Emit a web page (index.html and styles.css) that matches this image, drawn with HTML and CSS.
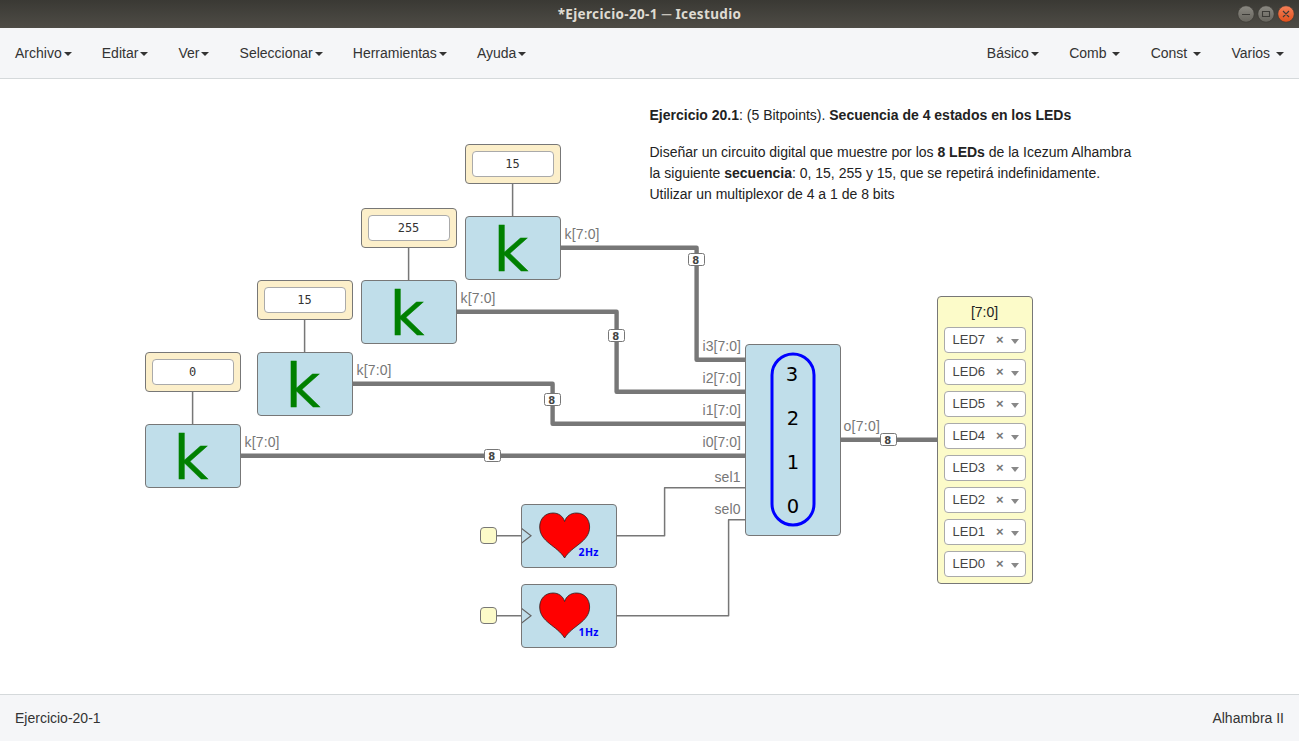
FILE: index.html
```html
<!DOCTYPE html>
<html lang="es">
<head>
<meta charset="utf-8">
<title>*Ejercicio-20-1 ─ Icestudio</title>
<link rel="stylesheet" href="styles.css">
</head>
<body>
<header class="titlebar">
  <span class="title">*Ejercicio-20-1 ─ Icestudio</span>
  <svg class="window-buttons" width="60" height="20" viewBox="0 0 60 20">
    <defs>
      <linearGradient id="gray" x1="0" y1="0" x2="0" y2="1"><stop offset="0" stop-color="#8b8982"/><stop offset="1" stop-color="#66645d"/></linearGradient>
      <linearGradient id="orange" x1="0" y1="0" x2="0" y2="1"><stop offset="0" stop-color="#f58058"/><stop offset="1" stop-color="#e0501c"/></linearGradient>
    </defs>
    <g stroke="#35342f" stroke-width=".6">
      <circle cx="10" cy="10" r="8.2" fill="url(#gray)"/>
      <circle cx="30" cy="10" r="8.2" fill="url(#gray)"/>
      <circle cx="50" cy="10" r="8.2" fill="url(#orange)"/>
    </g>
    <g stroke="#3c3b37" stroke-width="1.1" fill="none">
      <path d="M6 10.500h8M26.500 7.500h7v5h-7zM47 7l6 6M53 7l-6 6"/>
    </g>
  </svg>
</header>
<nav class="menubar">
  <ul class="menu">
    <li>Archivo<i class="caret"></i></li>
    <li>Editar<i class="caret"></i></li>
    <li>Ver<i class="caret"></i></li>
    <li>Seleccionar<i class="caret"></i></li>
    <li>Herramientas<i class="caret"></i></li>
    <li>Ayuda<i class="caret"></i></li>
  </ul>
  <ul class="menu blocks">
    <li>Básico<i class="caret"></i></li>
    <li>Comb <i class="caret"></i></li>
    <li>Const <i class="caret"></i></li>
    <li>Varios <i class="caret"></i></li>
  </ul>
</nav>
<main class="canvas">
  <svg class="wires" width="1299" height="615" viewBox="0 79 1299 615">
    <g class="bus">
      <path d="M561 247.800H696.600V359.800H745"/>
      <path d="M457 311.800H616.600V391.800H745"/>
      <path d="M353 383.800H552.600V423.800H745"/>
      <path d="M241 455.800H745"/>
      <path d="M841 439.800H937"/>
    </g>
    <g class="wire">
      <path d="M192.600 392V424M304.600 320V352M408.600 248V280M512.600 184V216"/>
      <path d="M497 535.700H521M617 535.700H664.600V487.700H745"/>
      <path d="M497 615.700H521M617 615.700H728.600V519.700H745"/>
    </g>
    <g class="port">
      <text x="564.5" y="239" textLength="35">k[7:0]</text>
      <text x="460.5" y="303" textLength="35">k[7:0]</text>
      <text x="356.5" y="375" textLength="35">k[7:0]</text>
      <text x="244.5" y="447" textLength="35">k[7:0]</text>
      <text x="702.5" y="351" textLength="38.5">i3[7:0]</text>
      <text x="702.5" y="383" textLength="38.5">i2[7:0]</text>
      <text x="702.5" y="415" textLength="38.5">i1[7:0]</text>
      <text x="702.5" y="447" textLength="38.5">i0[7:0]</text>
      <text x="714.5" y="482" textLength="26">sel1</text>
      <text x="714.5" y="514" textLength="26">sel0</text>
      <text x="843.5" y="431" textLength="36.5">o[7:0]</text>
    </g>
    <g class="size">
      <rect x="688.5" y="253.5" width="16" height="12" rx="2"/><text x="692.3" y="263.5">8</text>
      <rect x="608.5" y="329.5" width="16" height="12" rx="2"/><text x="612.3" y="339.5">8</text>
      <rect x="544.5" y="393.5" width="16" height="12" rx="2"/><text x="548.3" y="403.5">8</text>
      <rect x="484.5" y="449.5" width="16" height="12" rx="2"/><text x="488.3" y="459.5">8</text>
      <rect x="880.5" y="433.5" width="16" height="12" rx="2"/><text x="884.3" y="443.5">8</text>
    </g>
  </svg>

  <section class="note">
    <p><b>Ejercicio 20.1</b>: (5 Bitpoints). <b>Secuencia de 4 estados en los LEDs</b></p>
    <p>Diseñar un circuito digital que muestre por los <b>8 LEDs</b> de la Icezum Alhambra<br>
    la siguiente <b>secuencia</b>: 0, 15, 255 y 15, que se repetirá indefinidamente.<br>
    Utilizar un multiplexor de 4 a 1 de 8 bits</p>
  </section>

  <div class="node constant c1"><span>15</span></div>
  <div class="node constant c2"><span>255</span></div>
  <div class="node constant c3"><span>15</span></div>
  <div class="node constant c4"><span>0</span></div>

  <svg class="node k k1" viewBox="1 1 94 62"><text x="28.500" y="55">k</text></svg>
  <svg class="node k k2" viewBox="1 1 94 62"><text x="28.500" y="55">k</text></svg>
  <svg class="node k k3" viewBox="1 1 94 62"><text x="28.500" y="55">k</text></svg>
  <svg class="node k k4" viewBox="1 1 94 62"><text x="28.500" y="55">k</text></svg>

  <div class="node clock-in in1"></div>
  <div class="node clock-in in2"></div>
  <svg class="node heart h1" viewBox="1 1 94 62">
    <path class="clk" d="M0 24L10 31.700L0 39.500"/>
    <path class="shape" d="M43.600 17.500C42 12 37.500 9 32 9C24 9 18.700 15 18.700 23C18.700 38 36 41.500 43.600 54C51.200 41.500 68.600 38 68.600 23C68.600 15 63.300 9 55.500 9C50 9 45.200 12 43.600 17.500Z"/>
    <text x="57.500" y="52" textLength="20">2Hz</text>
  </svg>
  <svg class="node heart h2" viewBox="1 1 94 62">
    <path class="clk" d="M0 24L10 31.700L0 39.500"/>
    <path class="shape" d="M43.600 17.500C42 12 37.500 9 32 9C24 9 18.700 15 18.700 23C18.700 38 36 41.500 43.600 54C51.200 41.500 68.600 38 68.600 23C68.600 15 63.300 9 55.500 9C50 9 45.200 12 43.600 17.500Z"/>
    <text x="57.500" y="52" textLength="20">1Hz</text>
  </svg>

  <svg class="node mux" viewBox="1 1 94 190">
    <rect x="27" y="10" width="42" height="171" rx="21"/>
    <text x="47" y="37">3</text>
    <text x="48" y="81">2</text>
    <text x="48" y="125">1</text>
    <text x="48" y="169">0</text>
  </svg>

  <div class="node leds">
    <div class="range">[7:0]</div>
    <div class="pin">LED7<b>×</b><i></i></div>
    <div class="pin">LED6<b>×</b><i></i></div>
    <div class="pin">LED5<b>×</b><i></i></div>
    <div class="pin">LED4<b>×</b><i></i></div>
    <div class="pin">LED3<b>×</b><i></i></div>
    <div class="pin">LED2<b>×</b><i></i></div>
    <div class="pin">LED1<b>×</b><i></i></div>
    <div class="pin">LED0<b>×</b><i></i></div>
  </div>
</main>
<footer class="statusbar"><span>Ejercicio-20-1</span><span>Alhambra II</span></footer>
</body>
</html>
```
FILE: styles.css
```css
* { box-sizing: border-box; }
body {
  margin: 0;
  height: 741px;
  display: flex;
  flex-direction: column;
  overflow: hidden;
  background: #fff;
  color: #333;
  font: 14px/20px "Liberation Sans", Arial, sans-serif;
}
.titlebar {
  height: 28px;
  display: grid;
  grid-template-columns: 1fr auto 1fr;
  align-items: center;
  background: linear-gradient(#3a3934, #4e4c46);
}
.title {
  grid-column: 2;
  color: #dfdbd2;
  font: bold 13.5px/28px "Noto Sans", sans-serif;
  letter-spacing: .35px;
}
.window-buttons { justify-self: end; margin-right: 3px; }
.menubar {
  height: 51px;
  display: flex;
  justify-content: space-between;
  background: #f5f6f8;
  border-bottom: 1px solid #d5d9db;
}
.menu { display: flex; margin: 0; padding: 0; list-style: none; }
.menu li { padding: 15px 15.1px 15px 15px; white-space: pre; }
.blocks li { padding: 15px 15px 15px 15.3px; }
.caret {
  display: inline-block;
  margin-left: 2px;
  vertical-align: middle;
  border: 4px solid transparent;
  border-top-color: #333;
  border-bottom: 0;
}
.canvas { position: relative; height: 615px; }
.wires { display: block; }
.bus path, .wire path { fill: none; stroke: #777; stroke-linejoin: round; }
.bus path { stroke-width: 4.4; }
.wire path { stroke-width: 1.5; }
.port text { font-size: 14px; fill: #777; }
.size rect { fill: #fff; stroke: #777; }
.size text { font: bold 10px "DejaVu Sans", sans-serif; fill: #444; }

.note { position: absolute; left: 649.5px; top: 26px; line-height: 21px; color: #222; white-space: nowrap; }
.note p { margin: 0 0 16px; }

.node { position: absolute; border: 1px solid #777; border-radius: 4px; }
.constant { width: 96px; height: 40px; padding: 6px; background: #fcefca; }
.constant span {
  display: block;
  height: 26px;
  padding-right: 1px;
  border: 1px solid #aaa;
  border-radius: 4px;
  background: #fff;
  text-align: center;
  font: 12px/24px "DejaVu Sans Mono", monospace;
}
.c1 { left: 465px; top: 65px; }
.c2 { left: 361px; top: 129px; }
.c3 { left: 257px; top: 201px; }
.c4 { left: 145px; top: 273px; }
.k, .heart { width: 96px; height: 64px; background: #c0deea; }
.k { overflow: visible; }
.k text { font: 60px "DejaVu Sans", sans-serif; fill: green; stroke: green; stroke-width: .4; }
.k1 { left: 465px; top: 137px; }
.k2 { left: 361px; top: 201px; }
.k3 { left: 257px; top: 273px; }
.k4 { left: 145px; top: 345px; }
.clock-in { width: 17px; height: 17px; background: #fcfbc9; }
.in1 { left: 480px; top: 448px; }
.in2 { left: 480px; top: 528px; }
.h1 { left: 521px; top: 425px; }
.h2 { left: 521px; top: 505px; }
.clk { fill: none; stroke: #666; stroke-width: 1.2; }
.shape { fill: red; stroke: #222; stroke-width: .8; }
.heart text { font: bold 10.5px "Noto Sans", sans-serif; fill: blue; }
.mux { left: 745px; top: 265px; width: 96px; height: 192px; background: #c0deea; }
.mux rect { fill: none; stroke: blue; stroke-width: 3; }
.mux text { font: 19.5px "DejaVu Sans", sans-serif; text-anchor: middle; }
.leds {
  left: 937px;
  top: 217px;
  width: 96px;
  height: 288px;
  padding: 5px 6px;
  display: flex;
  flex-direction: column;
  gap: 6px;
  background: #fcfbc9;
}
.range { height: 19px; padding-right: 1px; line-height: 20px; text-align: center; color: #222; }
.pin {
  height: 26px;
  display: flex;
  align-items: center;
  padding: 0 6px 0 7.5px;
  border: 1px solid #aaa;
  border-radius: 4px;
  background: #fff;
  color: #444;
  font-size: 13px;
}
.pin b { margin-left: auto; width: 15px; font-size: 13px; color: #777; }
.pin i { border: 4.5px solid transparent; border-top: 5px solid #888; border-bottom: 0; margin-top: 3px; }
.statusbar {
  height: 47px;
  display: flex;
  justify-content: space-between;
  padding: 13px 15px;
  background: #f5f6f8;
  border-top: 1px solid #d5d9db;
}
```
